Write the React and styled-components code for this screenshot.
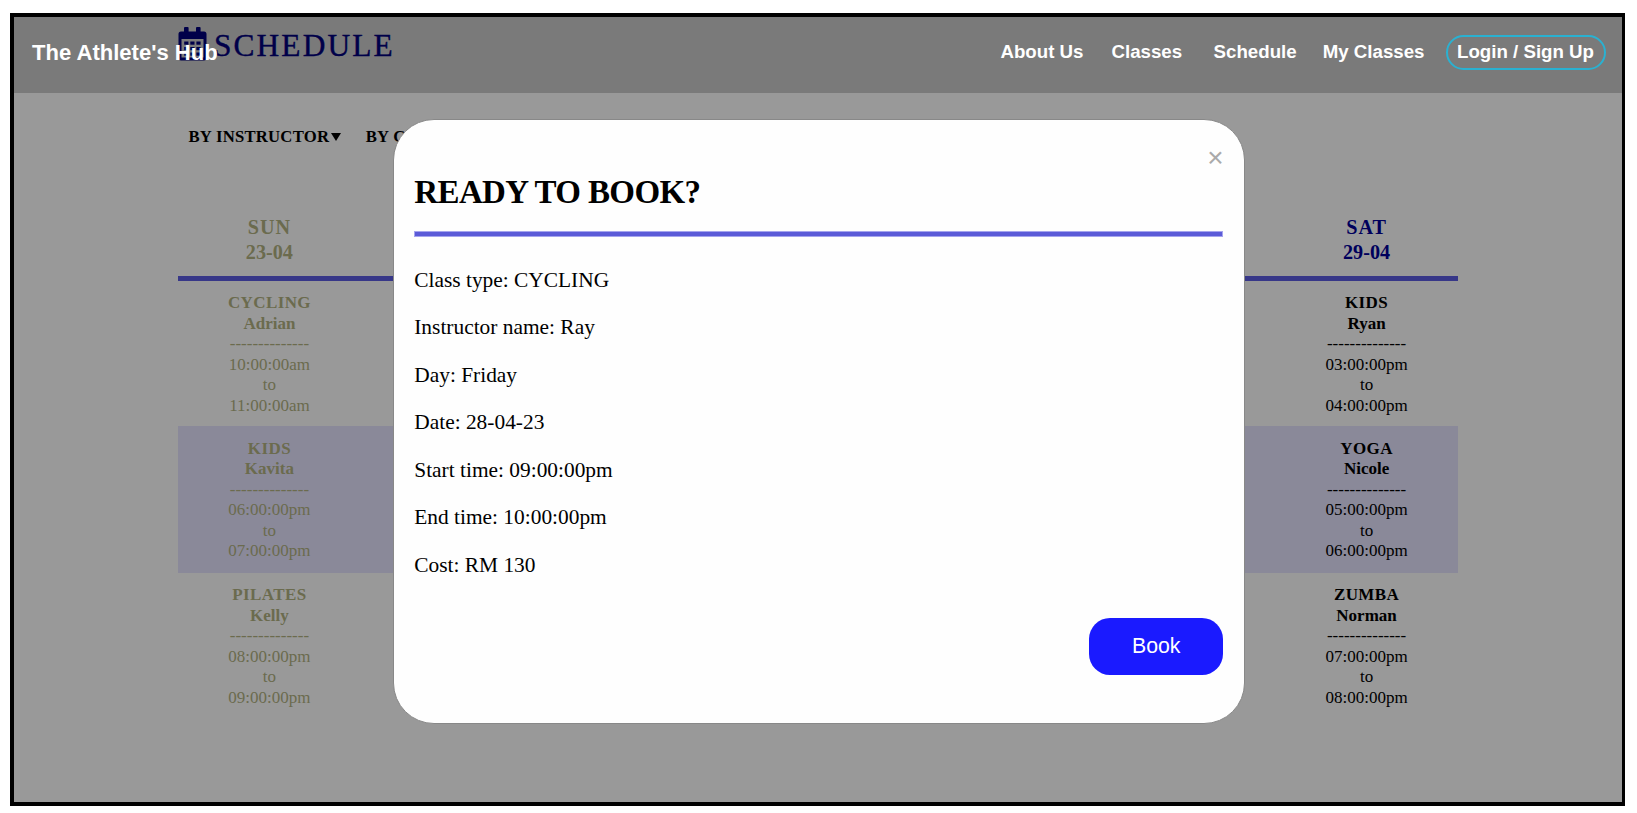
import React from "react";
import styled, { createGlobalStyle } from "styled-components";

const GlobalStyle = createGlobalStyle`
  * { box-sizing: border-box; }
  body {
    margin: 0;
    background: #fff;
    overflow: hidden;
    font-family: "Liberation Serif", serif;
  }
`;

const Frame = styled.div`
  position: relative;
  width: 1615px;
  height: 793px;
  margin: 13px 0 0 10px;
  border: 4px solid #000;
  border-right-width: 3.5px;
  background: #999;
  overflow: hidden;
`;

const Navbar = styled.header`
  position: absolute;
  inset: 0 0 auto 0;
  height: 76px;
  padding: 18px 16.5px 0 18px;
  display: flex;
  align-items: flex-start;
  justify-content: space-between;
  background: rgba(0, 0, 0, 0.2);
  color: #fff;
  font-family: "Liberation Sans", sans-serif;
  font-weight: 700;
`;

const Brand = styled.div`
  font-size: 22.05px;
  line-height: 35px;
`;

const Nav = styled.nav`
  display: flex;
  font-size: 18.7px;
  line-height: 34px;
`;

const NavLink = styled.a`
  margin-right: ${(p) => p.$gap}px;
  white-space: nowrap;
`;

const LoginLink = styled.a`
  width: 160px;
  height: 35px;
  border: 2px solid #2ab1d1;
  border-radius: 18px;
  line-height: 30px;
  text-align: center;
  white-space: nowrap;
`;

const Page = styled.main`
  width: 1280px;
  margin-left: 164px;
  padding-top: 10px;
`;

const Title = styled.h1`
  display: flex;
  margin: 0;
  height: 36px;
  color: #00005c;
  font-weight: 400;
  font-size: 31.4px;
  line-height: 38px;
  letter-spacing: 2.1px;
  -webkit-text-stroke: 0.4px #00005c;

  svg {
    width: 29px;
    height: 34px;
    margin-right: 7px;
  }
`;

const Filters = styled.div`
  display: flex;
  gap: 24.5px;
  height: 24px;
  margin: 62px 0 0 10.5px;
`;

const Filter = styled.div`
  display: flex;
  align-items: center;
  gap: 2px;
  color: #000;
  font-weight: 700;
  font-size: 16.7px;
  line-height: 24px;
  letter-spacing: 0.23px;
  white-space: nowrap;

  &::after {
    content: "";
    border: 5px solid transparent;
    border-top: 8px solid #000;
    border-bottom: 0;
  }
`;

const Week = styled.div`
  display: grid;
  grid-template-columns: repeat(7, 1fr);
  text-align: center;
`;

const WeekHeader = styled(Week)`
  height: 66px;
  margin-top: 66px;
  border-bottom: 5px solid #373788;
`;

const DayHead = styled.div`
  color: ${(p) => (p.$past ? "#6b6b4e" : "#00005c")};
  font-weight: 700;
  font-size: 20.2px;
  line-height: 25.3px;
`;

const DayName = styled.div`
  letter-spacing: 1px;
`;

const Slots = styled(Week)`
  height: ${(p) => p.$height}px;
  padding-top: ${(p) => p.$top}px;
  background: ${(p) => (p.$tinted ? "#8a8999" : "transparent")};
`;

const Slot = styled.div`
  color: ${(p) => (p.$past ? "#6b6b4e" : "#000")};
  font-size: 17px;
  line-height: 20.5px;
`;

const ClassType = styled.div`
  font-weight: 700;
  letter-spacing: 0.4px;
`;

const Instructor = styled.div`
  font-weight: 700;
`;

const Overlay = styled.div`
  position: absolute;
  inset: 0;
  display: flex;
  align-items: flex-start;
  justify-content: center;
  padding: 102px 4px 0 0;
`;

const Dialog = styled.section`
  width: 852px;
  height: 605px;
  margin-left: 5.5px;
  padding: 19px 20.5px;
  border: 1px solid #888;
  border-radius: 41px;
  background: #fefefe;
  color: #000;
`;

const Close = styled.button`
  display: block;
  margin: 0 0 0 auto;
  padding: 0;
  width: 16px;
  height: 35px;
  border: 0;
  background: none;
  color: #aaa;
  font: 28px/38px "Liberation Sans", sans-serif;
`;

const DialogTitle = styled.h2`
  margin: 0;
  font-size: 33px;
  line-height: 36px;
  font-weight: 700;
  letter-spacing: -0.6px;
`;

const Rule = styled.hr`
  height: 6px;
  margin: 21px 0 19.5px;
  border: 1px solid #a5a4ee;
  background: #5b5bd8;
`;

const Details = styled.div`
  font-size: 21.4px;
  line-height: 47.6px;
`;

const Footer = styled.div`
  display: flex;
  justify-content: flex-end;
  margin-top: 28px;
`;

const BookButton = styled.button`
  width: 134px;
  height: 57px;
  padding: 0;
  border: 0;
  border-radius: 21px;
  background: #1a1aff;
  color: #fff;
  font: 21.3px "Liberation Sans", sans-serif;
`;

const DAYS = [
  { name: "SUN", date: "23-04", past: true },
  null,
  null,
  null,
  null,
  null,
  { name: "SAT", date: "29-04" },
];

const ROWS = [
  {
    height: 145, top: 12,
    sun: ["CYCLING", "Adrian", "10:00:00am", "11:00:00am"],
    sat: ["KIDS", "Ryan", "03:00:00pm", "04:00:00pm"],
  },
  {
    height: 147, top: 12.5, tinted: true,
    sun: ["KIDS", "Kavita", "06:00:00pm", "07:00:00pm"],
    sat: ["YOGA", "Nicole", "05:00:00pm", "06:00:00pm"],
  },
  {
    height: 146, top: 12,
    sun: ["PILATES", "Kelly", "08:00:00pm", "09:00:00pm"],
    sat: ["ZUMBA", "Norman", "07:00:00pm", "08:00:00pm"],
  },
];

const DETAILS = [
  "Class type: CYCLING",
  "Instructor name: Ray",
  "Day: Friday",
  "Date: 28-04-23",
  "Start time: 09:00:00pm",
  "End time: 10:00:00pm",
  "Cost: RM 130",
];

function CalendarIcon() {
  return (
    <svg viewBox="0 0 29 34" fill="currentColor">
      <rect x="6" y="0" width="4.6" height="7" rx="1" />
      <rect x="18" y="0" width="4.6" height="7" rx="1" />
      <path
        fillRule="evenodd"
        d="M3 4.5h23a2.5 2.5 0 0 1 2.5 2.5v24a2.5 2.5 0 0 1-2.5 2.5H3A2.5 2.5 0 0 1 .5 31V7A2.5 2.5 0 0 1 3 4.5zM3.5 12v18.5h22V12z"
      />
      {[14.5, 20, 25.5].map((y) =>
        [6.2, 12.3, 18.4].map((x) => (
          <rect key={`${x}-${y}`} x={x} y={y} width="4.2" height="3.2" />
        ))
      )}
    </svg>
  );
}

function ClassSlot({ slot, past }) {
  if (!slot) return <div />;
  const [type, instructor, start, end] = slot;
  return (
    <Slot $past={past}>
      <ClassType>{type}</ClassType>
      <Instructor>{instructor}</Instructor>
      <div>--------------</div>
      <div>{start}</div>
      <div>to</div>
      <div>{end}</div>
    </Slot>
  );
}

export default function App() {
  return (
    <>
      <GlobalStyle />
      <Frame>
        <Page>
          <Title>
            <CalendarIcon />
            SCHEDULE
          </Title>
          <Filters>
            <Filter>BY INSTRUCTOR</Filter>
            <Filter>BY CLASS</Filter>
          </Filters>
          <WeekHeader>
            {DAYS.map((day, i) =>
              day ? (
                <DayHead key={i} $past={day.past}>
                  <DayName>{day.name}</DayName>
                  <div>{day.date}</div>
                </DayHead>
              ) : (
                <div key={i} />
              )
            )}
          </WeekHeader>
          {ROWS.map((row, r) => (
            <Slots key={r} $height={row.height} $top={row.top} $tinted={row.tinted}>
              {DAYS.map((day, i) => (
                <ClassSlot
                  key={i}
                  past={day?.past}
                  slot={i === 0 ? row.sun : i === 6 ? row.sat : null}
                />
              ))}
            </Slots>
          ))}
        </Page>
        <Navbar>
          <Brand>The Athlete's Hub</Brand>
          <Nav>
            <NavLink $gap={28}>About Us</NavLink>
            <NavLink $gap={31.5}>Classes</NavLink>
            <NavLink $gap={26}>Schedule</NavLink>
            <NavLink $gap={21}>My Classes</NavLink>
            <LoginLink>Login / Sign Up</LoginLink>
          </Nav>
        </Navbar>
        <Overlay>
          <Dialog>
            <Close>×</Close>
            <DialogTitle>READY TO BOOK?</DialogTitle>
            <Rule />
            <Details>
              {DETAILS.map((line) => (
                <div key={line}>{line}</div>
              ))}
            </Details>
            <Footer>
              <BookButton>Book</BookButton>
            </Footer>
          </Dialog>
        </Overlay>
      </Frame>
    </>
  );
}
